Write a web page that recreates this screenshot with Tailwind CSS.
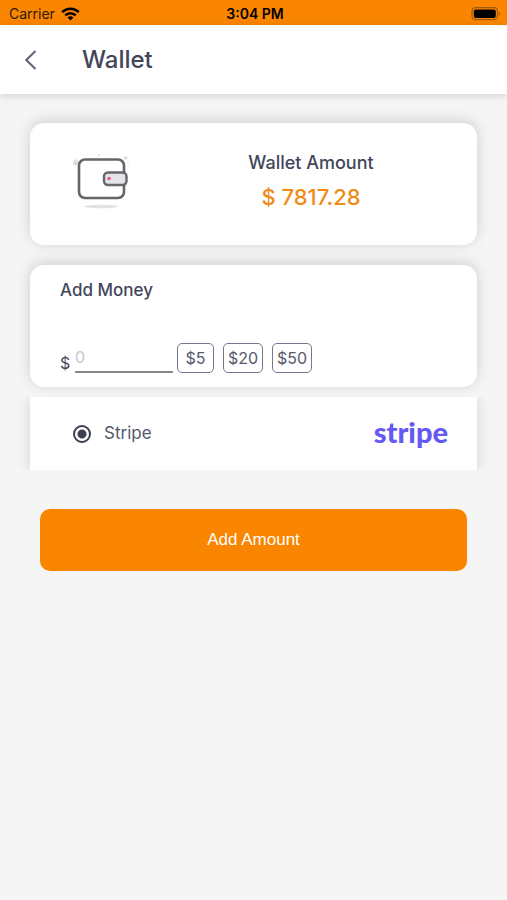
<!DOCTYPE html>
<html lang="en">
<head>
<meta charset="utf-8">
<meta name="viewport" content="width=device-width, initial-scale=1">
<title>Wallet</title>
<script src="https://cdn.jsdelivr.net/npm/@tailwindcss/browser@4"></script>
</head>
<body class="min-h-screen bg-[#f5f5f5] font-[Inter,sans-serif] text-[#43465a]">
<div class="grid h-[25px] grid-cols-3 items-center bg-[#fa8500] pr-[6px] pl-[9px] pt-[2px] text-sm text-black">
  <div class="flex items-center gap-[6px] text-[#2b1a05]">
    <span>Carrier</span>
    <svg class="h-[14px] w-[19px]" viewBox="0 0 19 14" fill="none" stroke="#000" stroke-width="2.6" aria-hidden="true">
      <path d="M1.2 5.2a11.8 11.8 0 0 1 16.6 0"/>
      <path d="M4.3 8.4a7.4 7.4 0 0 1 10.4 0"/>
      <path d="M9.5 13.6 6.6 10.6a4.1 4.1 0 0 1 5.8 0z" fill="#000" stroke="none"/>
    </svg>
  </div>
  <div class="text-center font-semibold whitespace-nowrap">3:04 PM</div>
  <svg class="h-[14px] w-[30px] justify-self-end" viewBox="0 0 30 14" aria-hidden="true">
    <rect x="1" y=".7" width="25.5" height="12" rx="3.6" fill="none" stroke="#a05a0c" stroke-width="1.2"/>
    <rect x="2.8" y="2.4" width="22" height="8.6" rx="2" fill="#000"/>
    <path d="M27.8 4.8v4c1.8-.6 1.8-3.4 0-4z" fill="#a05a0c"/>
  </svg>
</div>
<header class="flex h-[69px] items-center bg-white px-5 shadow-[0_2px_8px_rgba(0,0,0,0.14)]">
  <button type="button" aria-label="Back" class="flex h-10 w-[62px] items-center pl-1">
    <svg class="h-[22px] w-[14px]" viewBox="0 0 14 22" fill="none" stroke="#5d6078" stroke-width="2" aria-hidden="true"><path d="M11.500 2 2.300 11l9.200 9"/></svg>
  </button>
  <h1 class="text-2xl font-medium">Wallet</h1>
</header>
<main class="px-[30px] pt-[29px]">
  <section class="flex h-[122px] items-center rounded-[14px] bg-white shadow-[0_-2px_14px_rgba(0,0,0,0.16)]">
    <div class="flex w-1/3 justify-center pr-[6px] pb-1">
      <svg class="h-[60px] w-[60px]" viewBox="0 0 60 60" aria-hidden="true">
        <g fill="#dedee0"><path d="M2 9l3-2 3 3-3 4-3-2z"/><circle cx="28" cy="3" r="1"/><path d="M53 5l2-1 2 2-2 2-2-1z"/><circle cx="57" cy="11" r=".8"/></g>
        <rect x="8" y="7.500" width="45" height="38.500" rx="6" fill="#fff" stroke="#666668" stroke-width="2.600"/>
        <rect x="33" y="20.500" width="22.500" height="12.500" rx="4" fill="#e4e4ea" stroke="#666668" stroke-width="2.400"/>
        <circle cx="38" cy="26.500" r="1.800" fill="#e05c85"/>
        <ellipse cx="30" cy="54.500" rx="17" ry="1.800" fill="#e2e2e3"/>
      </svg>
    </div>
    <div class="flex flex-1 flex-col items-center pr-[34px] pb-[2px]">
      <h2 class="text-lg leading-7 font-medium">Wallet Amount</h2>
      <p class="text-[22px] leading-10 font-medium text-[#f28a17]">$ 7817.28</p>
    </div>
  </section>
  <section class="mt-5 flex h-[122px] flex-col justify-between rounded-[14px] bg-white px-[30px] pt-3 pb-[14px] shadow-[0_-2px_14px_rgba(0,0,0,0.16)]">
    <h2 class="text-[17px] leading-[26px] font-medium">Add Money</h2>
    <div class="flex h-[30px] items-end">
      <label for="amount" class="w-[15px] text-base leading-5">$</label>
      <input id="amount" type="text" inputmode="decimal" placeholder="0" class="h-[30px] w-[98px] border-b-2 border-[#8a8a8c] bg-transparent text-base outline-none placeholder:text-[#c7c7cb]">
      <div class="ml-1 flex gap-[9px]">
        <button type="button" class="h-[30px] w-[37px] rounded-[5px] border border-[#74778d] text-base text-[#55586a]">$5</button>
        <button type="button" class="h-[30px] w-10 rounded-[5px] border border-[#74778d] text-base text-[#55586a]">$20</button>
        <button type="button" class="h-[30px] w-10 rounded-[5px] border border-[#74778d] text-base text-[#55586a]">$50</button>
      </div>
    </div>
  </section>
  <div class="-mx-[15px] mt-[10px] overflow-hidden px-[15px]">
    <label class="flex h-[73px] items-center bg-white pr-[29px] pl-[43px] shadow-[0_0_14px_rgba(0,0,0,0.14)]">
      <input type="radio" name="method" checked class="h-[18px] w-[18px] appearance-none rounded-full border-2 border-[#3b3f50] checked:bg-[radial-gradient(circle,#3b3f50_4px,#fff_5px)]">
      <span class="ml-[13px] text-[17px] text-[#55586a]">Stripe</span>
      <span class="ml-auto pb-1 font-[Lato,sans-serif] text-[29px] leading-8 font-black text-[#6558f5]" aria-hidden="true">stripe</span>
    </label>
  </div>
  <div class="px-[10px] pt-[39px]">
    <button type="button" class="h-[62px] w-full rounded-[10px] bg-[#fa8500] font-[Liberation_Sans,Arial,sans-serif] text-[17px] text-white">Add Amount</button>
  </div>
</main>
</body>
</html>
